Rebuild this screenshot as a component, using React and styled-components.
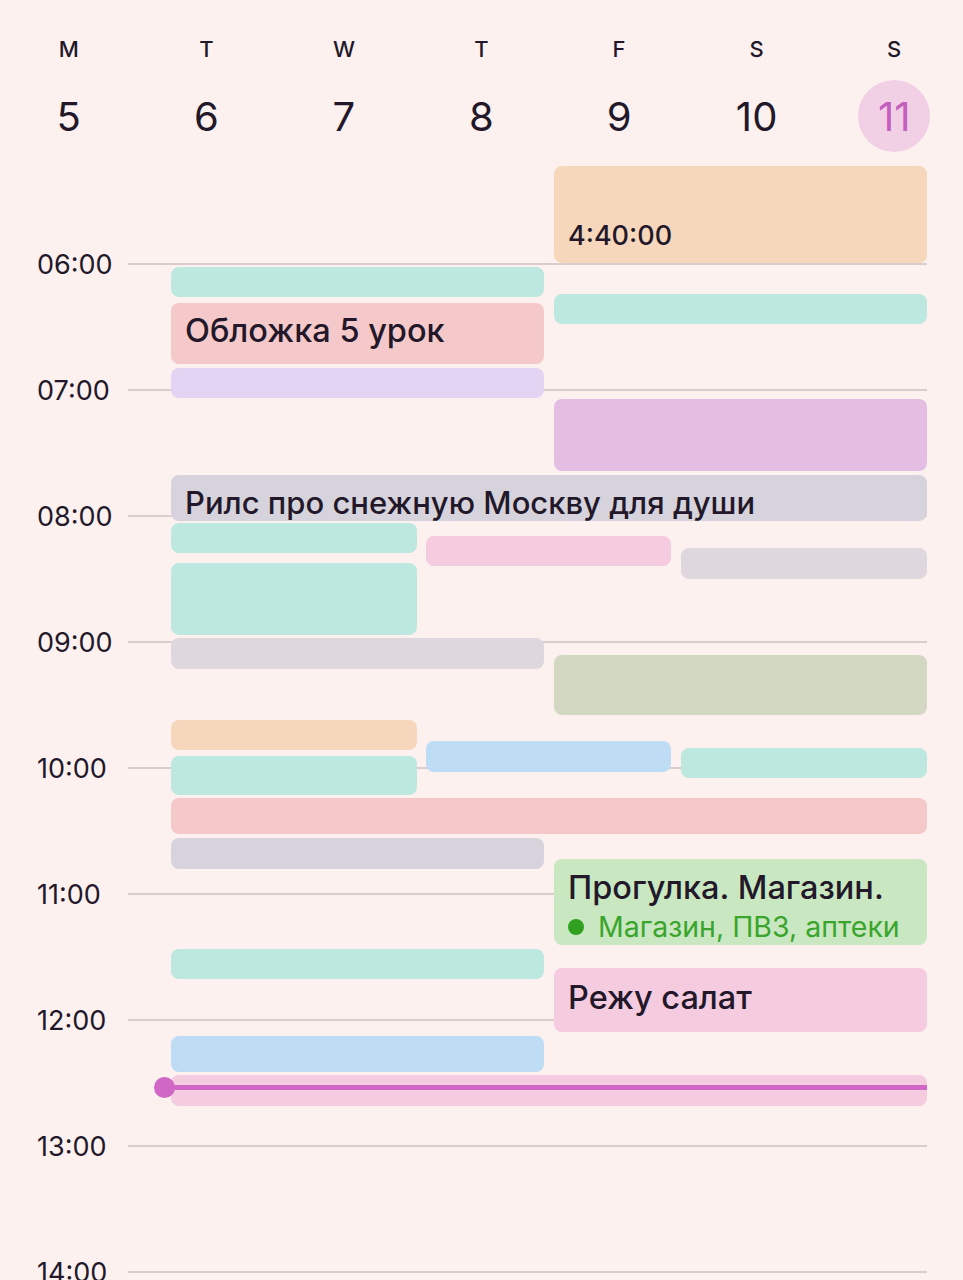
import React from "react";
import styled, { createGlobalStyle } from "styled-components";

const GlobalStyle = createGlobalStyle`
  html, body {
    margin: 0;
    padding: 0;
    background: #fcf1ef;
  }
  body {
    font-family: Inter, "Noto Sans", "Liberation Sans", sans-serif;
    color: #22182a;
  }
`;

const Screen = styled.div`
  width: 963px;
  height: 1280px;
  overflow: hidden;
  background: #fcf1ef;
`;

const WeekHeader = styled.div`
  display: grid;
  grid-template-columns: repeat(7, 1fr);
  height: 160px;
  padding-top: 30px;
  box-sizing: border-box;
`;

const DayCell = styled.div`
  display: flex;
  flex-direction: column;
  align-items: center;
`;

const DayLetter = styled.div`
  font-size: 22px;
  font-weight: 500;
  line-height: 38px;
`;

const DayNumber = styled.div`
  width: 72px;
  height: 72px;
  margin-top: 12px;
  border-radius: 50%;
  display: flex;
  align-items: center;
  justify-content: center;
  font-size: 40px;
  font-weight: 400;
  background: ${(p) => (p.$today ? "#f1cfe4" : "transparent")};
  color: ${(p) => (p.$today ? "#c45fbf" : "#22182a")};
`;

const Timeline = styled.div`
  position: relative;
  height: 1120px;
  padding-top: 41px;
  box-sizing: border-box;
`;

const HourRow = styled.div`
  display: flex;
  align-items: center;
  height: 126px;
  padding-left: 37px;
  padding-right: 36px;
`;

const HourLabel = styled.div`
  width: 91px;
  font-size: 27px;
  color: #22182a;
`;

const HourLine = styled.div`
  flex: 1;
  height: 2px;
  background: #dccccd;
`;

const EventLayer = styled.div`
  position: absolute;
  top: 0;
  bottom: 0;
  left: 171px;
  right: 36px;
`;

const Event = styled.div.attrs((p) => ({
  style: {
    top: `${p.$top - 160}px`,
    height: `${p.$h}px`,
    left: p.$left,
    width: p.$width,
  },
}))`
  position: absolute;
  box-sizing: border-box;
  border-radius: 8px;
  background: ${(p) => p.$color};
  padding: 0 14px;
  display: flex;
  flex-direction: column;
  justify-content: ${(p) => p.$justify || "center"};
  overflow: hidden;
`;

const EventTitle = styled.div`
  font-size: ${(p) => p.$size || 32.5}px;
  font-weight: 500;
  line-height: 38px;
  padding-top: ${(p) => p.$offset || 0}px;
  padding-bottom: ${(p) => p.$lift || 0}px;
  white-space: nowrap;
  color: #22182a;
`;

const EventTimer = styled.div`
  font-size: 27px;
  font-weight: 500;
  line-height: 30px;
  padding-bottom: 12px;
  color: #22182a;
`;

const EventPlace = styled.div`
  display: flex;
  align-items: center;
  gap: 14px;
  margin-top: 2px;
  font-size: 28.5px;
  line-height: 36px;
  color: #3aa52c;
  white-space: nowrap;
`;

const PlaceDot = styled.span`
  width: 16px;
  height: 16px;
  border-radius: 50%;
  background: #2fa11f;
`;

const NowLine = styled.div`
  position: absolute;
  top: ${1087 - 160 - 2}px;
  left: 164px;
  right: 36px;
  height: 5px;
  background: #d066c6;
  &::before {
    content: "";
    position: absolute;
    left: -10px;
    top: -8px;
    width: 21px;
    height: 21px;
    border-radius: 50%;
    background: #d066c6;
  }
`;

const days = [
  ["M", 5],
  ["T", 6],
  ["W", 7],
  ["T", 8],
  ["F", 9],
  ["S", 10],
  ["S", 11, true],
];

const hours = ["06:00", "07:00", "08:00", "09:00", "10:00", "11:00", "12:00", "13:00", "14:00"];

const C = {
  teal: "#bce8e0",
  peach: "#f6d7bb",
  rose: "#f5c8c9",
  lilac: "#e4d4f3",
  orchid: "#e4bde2",
  gray: "#d6d3dc",
  mist: "#ded7de",
  pink: "#f5cbe0",
  olive: "#d3d8c2",
  blue: "#bfdcf5",
  green: "#c9e8c1",
};

// column slots inside the 756px event area
const slot = {
  full: ["0px", "756px"],
  h1: ["0px", "373px"],
  h2: ["383px", "373px"],
  t1: ["0px", "246px"],
  t2: ["255px", "245px"],
  t3: ["510px", "246px"],
};

const events = [
  { s: "h2", y: 166, h: 97, c: C.peach, timer: "4:40:00" },
  { s: "h1", y: 267, h: 30, c: C.teal },
  { s: "h2", y: 294, h: 30, c: C.teal },
  { s: "h1", y: 303, h: 61, c: C.rose, title: "Обложка 5 урок", lift: 5 },
  { s: "h1", y: 368, h: 30, c: C.lilac },
  { s: "h2", y: 399, h: 72, c: C.orchid },
  { s: "full", y: 475, h: 46, c: C.gray, title: "Рилс про снежную Москву для души", top: true, size: 31, offset: 9 },
  { s: "t1", y: 523, h: 30, c: C.teal },
  { s: "t2", y: 536, h: 30, c: C.pink },
  { s: "t3", y: 548, h: 31, c: C.mist },
  { s: "t1", y: 563, h: 72, c: C.teal },
  { s: "h1", y: 638, h: 31, c: C.mist },
  { s: "h2", y: 655, h: 60, c: C.olive },
  { s: "t1", y: 720, h: 30, c: C.peach },
  { s: "t2", y: 741, h: 31, c: C.blue },
  { s: "t3", y: 748, h: 30, c: C.teal },
  { s: "t1", y: 756, h: 39, c: C.teal },
  { s: "full", y: 798, h: 36, c: C.rose },
  { s: "h1", y: 838, h: 31, c: C.gray },
  { s: "h2", y: 859, h: 86, c: C.green, title: "Прогулка. Магазин.", place: "Магазин, ПВЗ, аптеки", top: true, offset: 10 },
  { s: "h1", y: 949, h: 30, c: C.teal },
  { s: "h2", y: 968, h: 64, c: C.pink, title: "Режу салат", top: true, offset: 11 },
  { s: "h1", y: 1036, h: 36, c: C.blue },
  { s: "full", y: 1075, h: 31, c: C.pink },
];

const App = () => {
  return (
    <Screen>
      <GlobalStyle />
      <WeekHeader>
        {days.map(([letter, num, today], i) => (
          <DayCell key={i}>
            <DayLetter>{letter}</DayLetter>
            <DayNumber $today={today}>{num}</DayNumber>
          </DayCell>
        ))}
      </WeekHeader>
      <Timeline>
        {hours.map((h) => (
          <HourRow key={h}>
            <HourLabel>{h}</HourLabel>
            <HourLine />
          </HourRow>
        ))}
        <EventLayer>
          {events.map((e, i) => (
            <Event
              key={i}
              $top={e.y}
              $h={e.h}
              $left={slot[e.s][0]}
              $width={slot[e.s][1]}
              $color={e.c}
              $justify={e.timer ? "flex-end" : e.top ? "flex-start" : "center"}
            >
              {e.timer && <EventTimer>{e.timer}</EventTimer>}
              {e.title && (
                <EventTitle $size={e.size} $offset={e.offset} $lift={e.lift}>
                  {e.title}
                </EventTitle>
              )}
              {e.place && (
                <EventPlace>
                  <PlaceDot />
                  {e.place}
                </EventPlace>
              )}
            </Event>
          ))}
        </EventLayer>
        <NowLine />
      </Timeline>
    </Screen>
  );
};

export default App;
